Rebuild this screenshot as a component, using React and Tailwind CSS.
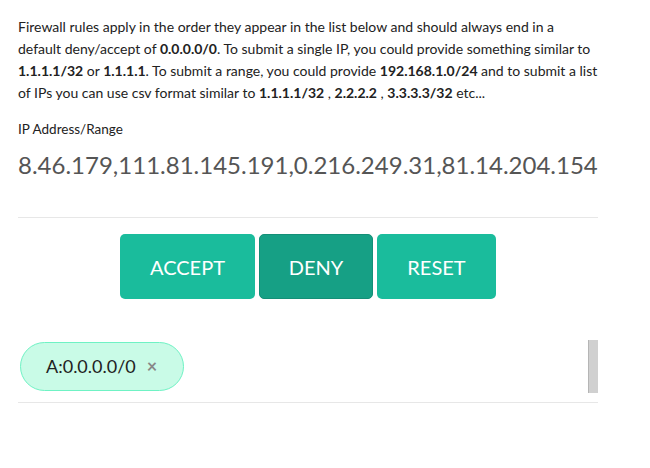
import React from "react";

const App = () => {
  return (
    <div className="w-[650px] h-[468px] bg-white font-['Lato',sans-serif]">
      <div className="w-[580px] ml-[18px] pt-[16px]">
        <p className="text-[14px] leading-[22px] text-[#222]">
          Firewall rules apply in the order they appear in the list below and should always end in a default deny/accept of{" "}
          <b>0.0.0.0/0</b>. To submit a single IP, you could provide something similar to <b>1.1.1.1/32</b> or{" "}
          <b>1.1.1.1</b>. To submit a range, you could provide <b>192.168.1.0/24</b> and to submit a list of IPs you can
          use csv format similar to <b>1.1.1.1/32</b> , <b>2.2.2.2</b> , <b>3.3.3.3/32</b> etc...
        </p>
        <label className="block mt-[14px] text-[13.5px] leading-[22px] text-[#222]">IP Address/Range</label>
        <div className="mt-[9px] h-[32px] text-[24px] leading-[32px] text-[#555] whitespace-nowrap overflow-hidden">
          8.46.179,111.81.145.191,0.216.249.31,81.14.204.154
        </div>
        <hr className="mt-[36px] border-[#e7e7e7]" />
        <div className="flex justify-center gap-[4px] mt-[16px]">
          <button className="w-[135px] h-[65px] rounded-[5px] bg-[#1abc9c] text-white text-[20px]">ACCEPT</button>
          <button className="w-[114px] h-[65px] rounded-[5px] bg-[#16a085] border border-[#148f77] text-white text-[20px]">
            DENY
          </button>
          <button className="w-[119px] h-[65px] rounded-[5px] bg-[#1abc9c] text-white text-[20px]">RESET</button>
        </div>
        <div className="flex items-center justify-between mt-[41px] h-[53px]">
          <div className="ml-[2px] flex items-center gap-[11px] h-[49px] pl-[25px] pr-[26px] rounded-full bg-[#c9fbe7] border border-[#6ff2c4]">
            <span className="text-[18px] text-[#222]">A:0.0.0.0/0</span>
            <span className="text-[18px] text-[#888] font-bold">×</span>
          </div>
          <div className="w-[10px] h-[53px] bg-[#d0d0d0] border-l border-[#b5b5b5]" />
        </div>
        <hr className="mt-[9px] border-[#e7e7e7]" />
      </div>
    </div>
  );
};

export default App;
